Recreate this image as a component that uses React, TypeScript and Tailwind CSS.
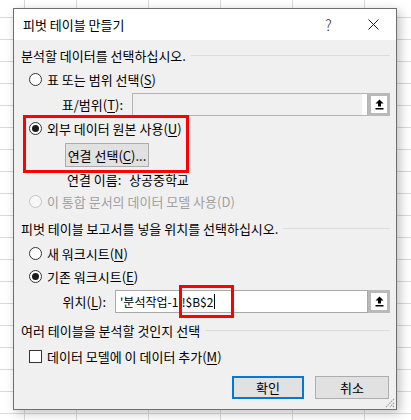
import clsx from "clsx";

const cols = ["w-[25px]", "w-[52px]", "w-[72px]", "w-[72px]", "w-[72px]", "w-[72px]", "w-[72px]"];
const rows = Array.from({ length: 20 }, (_, i) => i);

function SheetGrid() {
  return (
    <div className="flex flex-col">
      {rows.map((r) => (
        <div key={r} className={clsx("flex shrink-0", r === 0 ? "h-[18px]" : "h-[22px]")}>
          {cols.map((c, i) => (
            <div key={i} className={clsx(c, "shrink-0 border-r border-b border-[#dadada]")} />
          ))}
        </div>
      ))}
    </div>
  );
}

function Key({ k }: { k: string }) {
  return <span className="underline underline-offset-2">{k}</span>;
}

function Radio({ checked, disabled, children }: { checked?: boolean; disabled?: boolean; children: React.ReactNode }) {
  return (
    <div className={clsx("flex h-[22px] items-center pl-[15px]", disabled ? "text-[#a0a0a0]" : "text-black")}>
      <span
        className={clsx(
          "flex h-[13px] w-[13px] shrink-0 items-center justify-center rounded-full border",
          disabled ? "border-[#c4c4c4] bg-[#f7f7f7]" : "border-[#333333] bg-white"
        )}
      >
        {checked && <span className="h-[7px] w-[7px] rounded-full bg-[#1a1a1a]" />}
      </span>
      <span className="ml-[5px] whitespace-nowrap">{children}</span>
    </div>
  );
}

function SectionHeader({ children }: { children: React.ReactNode }) {
  return (
    <div className="flex h-[22px] items-center pl-[7px] pr-[6px]">
      <span className="whitespace-nowrap">{children}</span>
      <span className="ml-[5px] h-px flex-1 bg-[#dcdcdc]" />
    </div>
  );
}

function CollapseButton() {
  return (
    <div className="flex h-[23px] w-[22px] shrink-0 items-center justify-center border-[3px] border-[#b9b9b9] bg-white">
      <svg width="9" height="11" viewBox="0 0 9 11">
        <polygon points="4.5,0.5 8.5,4.5 6,4.5 6,7.5 3,7.5 3,4.5 0.5,4.5" fill="#000" />
        <rect x="0.5" y="9" width="8" height="1.5" fill="#000" />
      </svg>
    </div>
  );
}

function Dialog() {
  return (
    <div className="absolute left-[13px] top-[8px] h-[402px] w-[384px] border border-[#6f6f6f] bg-[#f0f0f0] shadow-[3px_3px_10px_rgba(0,0,0,0.25)]">
      {/* title bar */}
      <div className="flex h-[31px] items-center bg-white">
        <span className="pl-[9px]">피벗 테이블 만들기</span>
        <div className="ml-auto flex h-full items-center">
          <span className="w-[45px] text-center text-[15px] font-light text-[#222]">?</span>
          <span className="flex w-[45px] items-center justify-center">
            <svg width="11" height="11" viewBox="0 0 11 11">
              <path d="M0.5 0.5 L10.5 10.5 M10.5 0.5 L0.5 10.5" stroke="#1a1a1a" strokeWidth="1" />
            </svg>
          </span>
        </div>
      </div>

      <div className="flex flex-col">
        <div className="mt-[4px]">
          <SectionHeader>분석할 데이터를 선택하십시오.</SectionHeader>
        </div>
        <div className="mt-[2px]">
          <Radio>
            표 또는 범위 선택(<Key k="S" />)
          </Radio>
        </div>
        <div className="mt-[3px] flex h-[23px] items-center">
          <span className="w-[109px] text-right whitespace-nowrap">
            표/범위(<Key k="T" />):
          </span>
          <div className="ml-[9px] flex h-[23px] w-[236px] border border-[#b4b4b4] bg-[#f0f0f0]">
            <span className="flex-1" />
            <span className="w-[5px] bg-white" />
          </div>
          <CollapseButton />
        </div>
        <div className="mt-[1px]">
          <Radio checked>
            외부 데이터 원본 사용(<Key k="U" />)
          </Radio>
        </div>
        <div className="mt-[4px] flex h-[24px] pl-[51px]">
          <button className="h-[24px] w-[84px] border border-[#adadad] bg-[#e1e1e1] whitespace-nowrap">
            연결 선택(<Key k="C" />)...
          </button>
        </div>
        <div className="mt-[1px] flex h-[22px] items-center pl-[53px] whitespace-nowrap">
          <span className="w-[62px]">연결 이름:</span>
          <span>상공중학교</span>
        </div>
        <Radio disabled>이 통합 문서의 데이터 모델 사용(D)</Radio>

        <div className="mt-[5px]">
          <SectionHeader>피벗 테이블 보고서를 넣을 위치를 선택하십시오.</SectionHeader>
        </div>
        <div className="mt-[3px]">
          <Radio>
            새 워크시트(<Key k="N" />)
          </Radio>
        </div>
        <div className="mt-[1px]">
          <Radio checked>
            기존 워크시트(<Key k="E" />)
          </Radio>
        </div>
        <div className="mt-[3px] flex h-[23px] items-center">
          <span className="w-[92px] text-right whitespace-nowrap">
            위치(<Key k="L" />):
          </span>
          <div className="ml-[9px] flex h-[23px] w-[253px] items-center border border-[#a9a9a9] bg-white pl-[4px] text-[12px] whitespace-nowrap">
            <span>'분석작업-1'!$B$2</span>
            <span className="ml-px h-[15px] w-px bg-black" />
          </div>
          <CollapseButton />
        </div>

        <div className="mt-[6px]">
          <SectionHeader>여러 테이블을 분석할 것인지 선택</SectionHeader>
        </div>
        <div className="mt-[4px] flex h-[22px] items-center pl-[15px]">
          <span className="h-[13px] w-[13px] shrink-0 border border-[#333333] bg-white" />
          <span className="ml-[5px] whitespace-nowrap">
            데이터 모델에 이 데이터 추가(<Key k="M" />)
          </span>
        </div>

        <div className="mt-[9px] flex h-[23px] justify-end gap-[11px] pr-[7px]">
          <button className="h-[23px] w-[72px] border-2 border-[#0078d7] bg-[#e1e1e1]">확인</button>
          <button className="h-[23px] w-[74px] border border-[#adadad] bg-[#e1e1e1]">취소</button>
        </div>
      </div>

      {/* annotation boxes */}
      <div className="absolute left-[9px] top-[106px] h-[58px] w-[166px] border-[3px] border-[#ff0000]" />
      <div className="absolute left-[165px] top-[276px] h-[33px] w-[55px] border-[3px] border-[#ff0000]" />

      {/* resize grip */}
      <svg className="absolute right-[1px] bottom-[1px]" width="12" height="12" viewBox="0 0 12 12">
        <path d="M11 3 L3 11 M11 7 L7 11 M11 10 L10 11" stroke="#a0a0a0" strokeWidth="1.2" strokeDasharray="1.5 1" />
      </svg>
    </div>
  );
}

export default function App() {
  return (
    <div className="relative h-[420px] w-[411px] overflow-hidden bg-white font-['Noto_Sans_CJK_KR','Noto_Sans',sans-serif] text-[13px] leading-none text-black">
      <SheetGrid />
      <Dialog />
    </div>
  );
}
